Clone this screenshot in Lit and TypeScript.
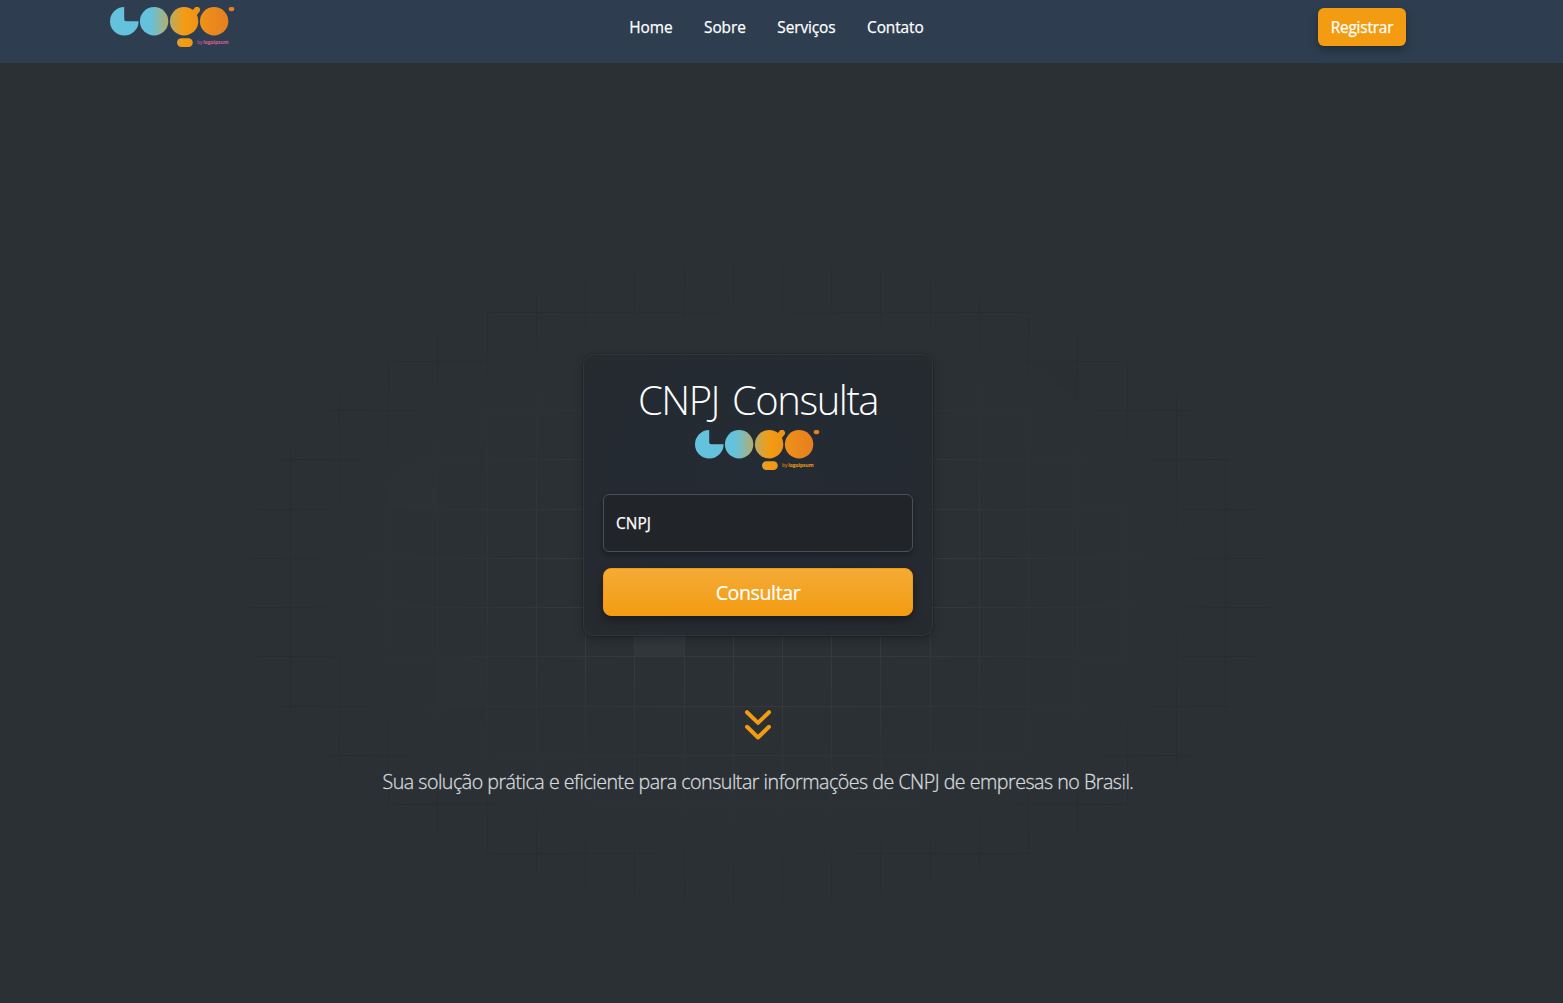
import { LitElement, html, svg, css } from "lit";
import { customElement, property } from "lit/decorators.js";

const STEP = 49.23;
const COLUMNS = Array.from({ length: 20 }, (_, i) => Math.round(290.7 + i * STEP) - 0.5);
const ROWS = Array.from({ length: 12 }, (_, i) => Math.round(312.7 + i * STEP) - 0.5);

@customElement("brand-logo")
export class BrandLogo extends LitElement {
  @property() tagline = "#f39c12";

  static styles = css`
    :host {
      display: block;
      width: 125px;
      height: 41px;
    }
    svg {
      display: block;
    }
    .tagline {
      font-family: "Open Sans", sans-serif;
      font-size: 5px;
    }
    .name {
      font-weight: 700;
    }
  `;

  render() {
    return html`<svg width="125" height="41" viewBox="0 0 125 41" aria-label="Logo">
      <defs>
        <linearGradient id="brand" gradientUnits="userSpaceOnUse" x1="0" y1="0" x2="119" y2="0">
          <stop offset="0.34" stop-color="#65c2dc" />
          <stop offset="0.62" stop-color="#f39c12" />
          <stop offset="1" stop-color="#e67e22" />
        </linearGradient>
      </defs>
      <g fill="url(#brand)">
        <path d="M14.2 0 V12.2 Q14.2 14.2 16.2 14.2 H28.6 A14.3 14.3 0 1 1 14.2 0 Z" />
        <circle cx="44.1" cy="14.2" r="14.2" />
        <circle cx="74.1" cy="14.2" r="14.2" />
        <path d="M82 4.2 L84.2 1.5 A3.1 3.1 0 1 1 89.4 4.8 L86.4 8.4 L83 9 Z" />
        <circle cx="104.1" cy="14.2" r="14.2" />
        <rect x="67" y="31.2" width="15.8" height="8.8" rx="4.4" />
        <rect x="118.6" y="0" width="5.8" height="4.2" rx="2.1" />
      </g>
      <text class="tagline" y="37" fill=${this.tagline}>
        <tspan x="87" textLength="5.4" lengthAdjust="spacingAndGlyphs">by</tspan>
        <tspan class="name" x="93.2" textLength="25.4" lengthAdjust="spacingAndGlyphs">logoipsum</tspan>
      </text>
    </svg>`;
  }
}

@customElement("grid-backdrop")
export class GridBackdrop extends LitElement {
  static styles = css`
    :host,
    svg {
      display: block;
    }
  `;

  render() {
    return html`<svg width="1563" height="1003" viewBox="0 0 1563 1003" aria-hidden="true">
      <defs>
        <radialGradient
          id="fade"
          gradientUnits="userSpaceOnUse"
          cx="0"
          cy="0"
          r="1"
          gradientTransform="translate(757 583) scale(522 325)"
        >
          <stop offset="0" stop-color="#373c3f" />
          <stop offset="0.35" stop-color="#34393c" />
          <stop offset="0.6" stop-color="#2e3337" />
          <stop offset="0.76" stop-color="#2b3034" />
          <stop offset="0.96" stop-color="#262b2e" />
          <stop offset="1" stop-color="#262b2e" stop-opacity="0" />
        </radialGradient>
        <linearGradient id="cell" x1="0" y1="0" x2="0.5" y2="1">
          <stop offset="0" stop-color="#fff" stop-opacity="0" />
          <stop offset="1" stop-color="#fff" stop-opacity="0.008" />
        </linearGradient>
      </defs>
      <rect x="634" y="607" width="50" height="49" fill="#fff" fill-opacity="0.03" />
      <rect x="437" y="656" width="49" height="49" fill="#fff" fill-opacity="0.008" />
      <rect x="388" y="459" width="49" height="49" fill="url(#cell)" />
      <path d="M1028 361 H1077 V402 Z" fill="#000" fill-opacity="0.012" />
      <g stroke="url(#fade)" stroke-width="1">
        ${COLUMNS.map((x) => svg`<path d="M${x} 250 L${x + 0.01} 920" />`)}
        ${ROWS.map((y) => svg`<path d="M230 ${y} L1290 ${y + 0.01}" />`)}
      </g>
    </svg>`;
  }
}

@customElement("app-root")
export class AppRoot extends LitElement {
  static styles = css`
    :host {
      display: block;
      font-family: "Open Sans", "Noto Sans", sans-serif;
      color: #fff;
    }
    .page {
      position: relative;
      box-sizing: border-box;
      height: 1003px;
      overflow: hidden;
      background: #2b3034;
    }
    .backdrop {
      position: absolute;
      inset: 0;
    }
    .bar {
      position: relative;
      box-sizing: border-box;
      height: 63px;
      padding: 7px 157px 0 110px;
      display: flex;
      justify-content: space-between;
      align-items: flex-start;
      background: #2e3e50;
    }
    .links {
      display: flex;
      gap: 31.6px;
      margin: 9px 0 0;
      font-size: 15.4px;
      line-height: 24px;
      font-weight: 500;
      letter-spacing: -0.09px;
      -webkit-text-stroke: 0.25px #fff;
    }
    .register {
      box-sizing: border-box;
      width: 88px;
      height: 38px;
      margin-top: 1px;
      padding: 0;
      border: 0;
      border-radius: 6px;
      background: #f39c12;
      color: #fff;
      font: 500 15.4px/38px "Open Sans", sans-serif;
      letter-spacing: -0.2px;
      -webkit-text-stroke: 0.25px #fff;
      box-shadow: 0 4px 8px rgba(0, 0, 0, 0.3);
    }
    .register .label,
    .submit .label {
      display: block;
      padding-top: 1px;
    }
    .hero {
      position: relative;
      display: flex;
      flex-direction: column;
      align-items: center;
      padding: 291px 47px 0 0;
    }
    .card {
      box-sizing: border-box;
      width: 350px;
      height: 282px;
      padding: 19px;
      display: flex;
      flex-direction: column;
      align-items: center;
      border: 1px solid #303539;
      border-radius: 10px;
      background: radial-gradient(
        ellipse at 50% 45%,
        rgba(35, 43, 52, 0.96) 0%,
        rgba(36, 42, 50, 0.94) 55%,
        rgba(38, 42, 46, 0.92) 100%
      );
      box-shadow:
        0 0 0 1px rgba(0, 0, 0, 0.12),
        0 4px 10px rgba(0, 0, 0, 0.22);
    }
    .title {
      margin: 0;
      padding: 2px 0 6px;
      font-size: 40px;
      line-height: 48px;
      font-weight: 300;
      letter-spacing: -1.45px;
      word-spacing: 4px;
      white-space: nowrap;
    }
    .mark {
      margin-right: 0.6px;
    }
    .field {
      box-sizing: border-box;
      width: 310px;
      height: 58px;
      margin: 23px 0 16px;
      padding: 1px 12px 0;
      border: 1px solid #495057;
      border-radius: 6px;
      background: #212529;
      font-size: 15.4px;
      line-height: 56px;
      font-weight: 500;
      letter-spacing: 0.1px;
      -webkit-text-stroke: 0.25px #fff;
      box-shadow: 0 3px 6px rgba(0, 0, 0, 0.3);
    }
    .submit {
      box-sizing: border-box;
      width: 310px;
      height: 48px;
      padding: 0;
      border: 1px solid #f39c12;
      border-radius: 8px;
      background: linear-gradient(#f5ab36, #f39c12);
      color: #fff;
      font: 500 19.6px/46px "Open Sans", sans-serif;
      letter-spacing: -0.4px;
      -webkit-text-stroke: 0.2px #fff;
      box-shadow: 0 4px 8px rgba(0, 0, 0, 0.35);
    }
    .down {
      display: block;
      margin: 72px 0 25px;
    }
    .lead {
      margin: 0;
      font-size: 19.6px;
      line-height: 30px;
      font-weight: 300;
      letter-spacing: -0.48px;
      -webkit-text-stroke: 0.3px #d5d9dd;
      white-space: nowrap;
      color: #d5d9dd;
    }
  `;

  render() {
    return html`<div class="page">
      <grid-backdrop class="backdrop"></grid-backdrop>
      <header class="bar">
        <brand-logo tagline="#d6608f"></brand-logo>
        <nav class="links">
          ${["Home", "Sobre", "Serviços", "Contato"].map((label) => html`<span>${label}</span>`)}
        </nav>
        <button class="register"><span class="label">Registrar</span></button>
      </header>
      <main class="hero">
        <section class="card">
          <h1 class="title">CNPJ Consulta</h1>
          <brand-logo class="mark"></brand-logo>
          <div class="field">CNPJ</div>
          <button class="submit"><span class="label">Consultar</span></button>
        </section>
        <svg class="down" width="28" height="34" viewBox="0 0 28 34" aria-hidden="true">
          <path
            d="M3 4.2 L14 14.9 L25 4.2 M3 18.8 L14 29.5 L25 18.8"
            fill="none"
            stroke="#f39c12"
            stroke-width="4"
            stroke-linecap="round"
            stroke-linejoin="round"
          />
        </svg>
        <p class="lead">
          Sua solução prática e eficiente para consultar informações de CNPJ de empresas no Brasil.
        </p>
      </main>
    </div>`;
  }
}
